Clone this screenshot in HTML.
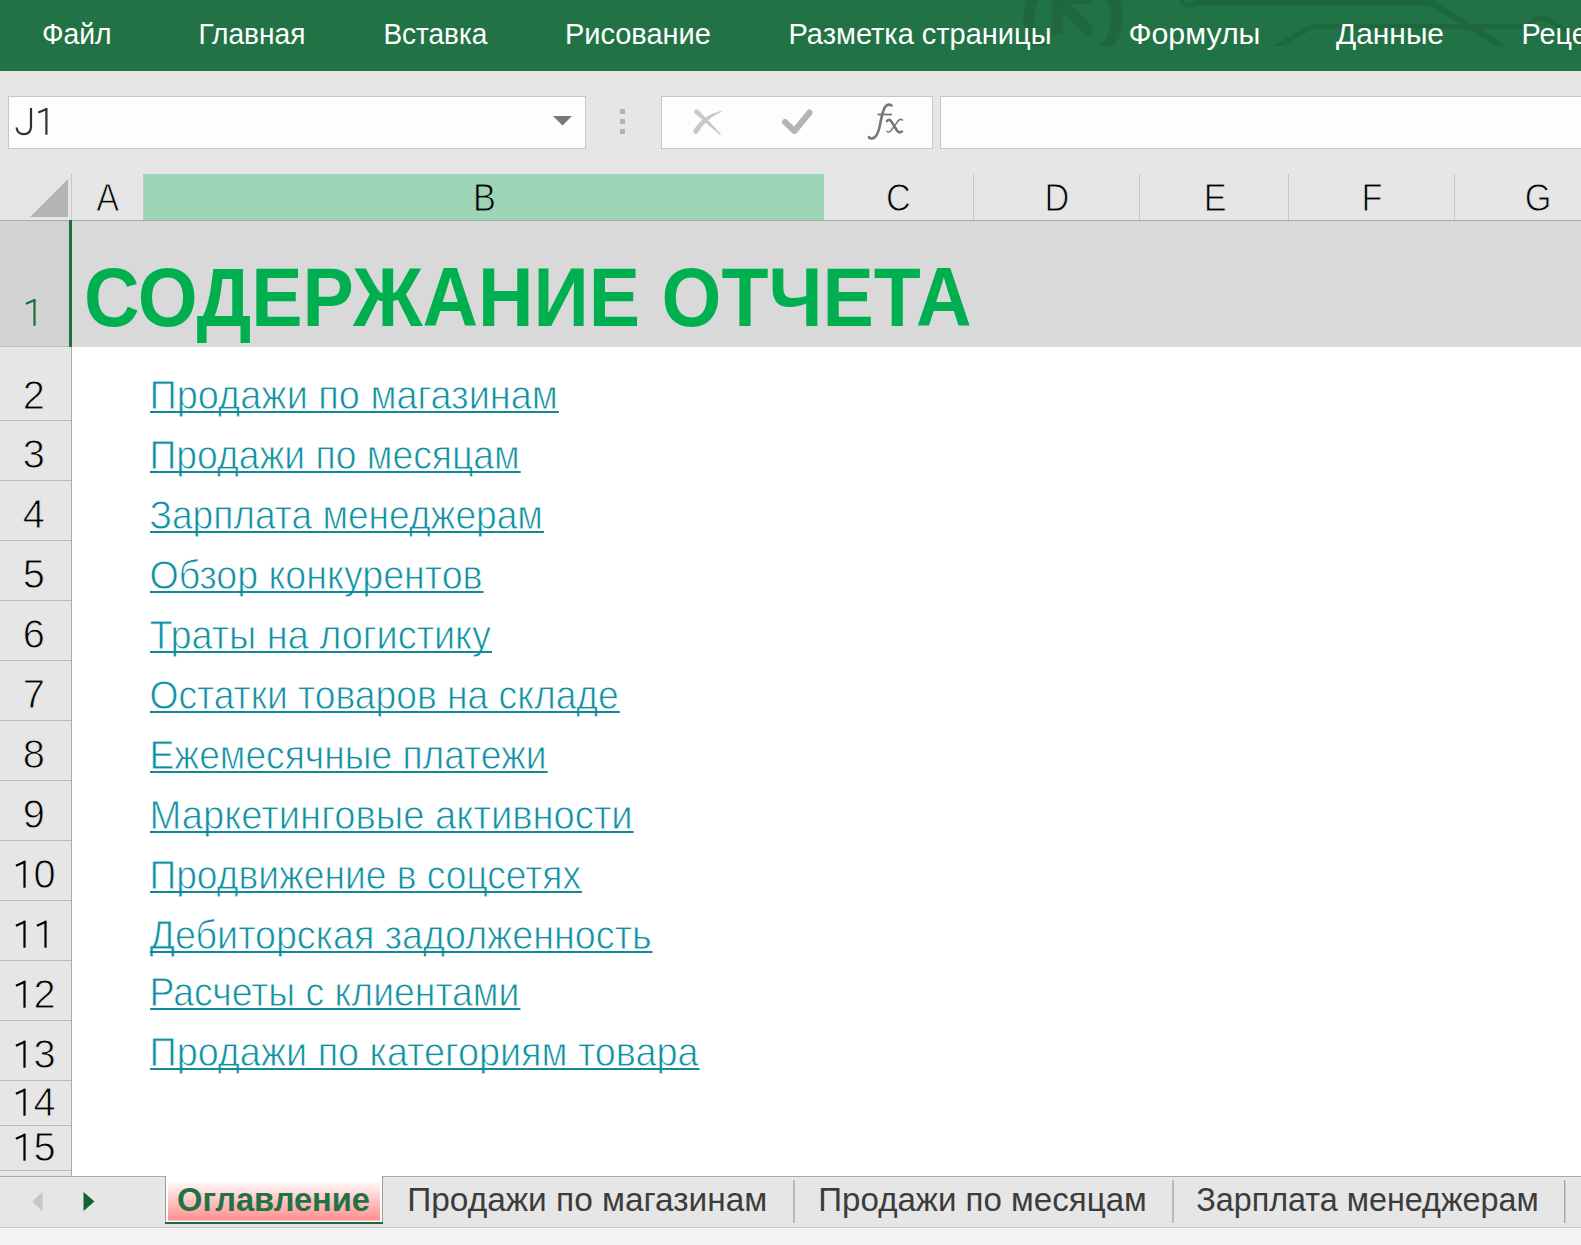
<!DOCTYPE html>
<html><head><meta charset="utf-8"><title>Excel</title>
<style>
html,body{margin:0;padding:0;background:#fff;width:1581px;height:1245px;overflow:hidden}
svg{display:block}
text{font-family:"Liberation Sans",sans-serif}
</style></head><body>
<svg width="1581" height="1245" viewBox="0 0 1581 1245">

<rect x="0" y="0" width="1581" height="71" fill="#217346"/>
<defs><clipPath id="rc"><rect x="0" y="0" width="1581" height="46"/></clipPath></defs>
<g fill="none" stroke="#1f673f" clip-path="url(#rc)"><path d="M1049.2 55 A 44 44 0 1 1 1096.8 55" stroke-width="11.5"/><path d="M1057.3 -7 V34.5 M1051.5 -1.5 H1092" stroke-width="11.5"/><path d="M1062 4 L1091 33" stroke-width="11"/><circle cx="1189" cy="-1" r="7" stroke-width="5"/><path d="M1196 2.5 H1431 L1516 55" stroke-width="6"/><path d="M1260.6 55 L1313 26.5 H1527" stroke-width="5"/><path d="M1527 26.5 Q1540 12 1552 22 L1581 40" stroke-width="5"/></g>
<text x="41.9" y="43.8" font-size="28.8" fill="#ffffff" textLength="69.7" lengthAdjust="spacingAndGlyphs">Файл</text>
<text x="198.4" y="43.8" font-size="28.8" fill="#ffffff" textLength="107" lengthAdjust="spacingAndGlyphs">Главная</text>
<text x="383.4" y="43.8" font-size="28.8" fill="#ffffff" textLength="104" lengthAdjust="spacingAndGlyphs">Вставка</text>
<text x="564.9" y="43.8" font-size="28.8" fill="#ffffff" textLength="146" lengthAdjust="spacingAndGlyphs">Рисование</text>
<text x="788.5" y="43.8" font-size="28.8" fill="#ffffff" textLength="263" lengthAdjust="spacingAndGlyphs">Разметка страницы</text>
<text x="1128.4" y="43.8" font-size="28.8" fill="#ffffff" textLength="132" lengthAdjust="spacingAndGlyphs">Формулы</text>
<text x="1336" y="43.8" font-size="28.8" fill="#ffffff" textLength="108" lengthAdjust="spacingAndGlyphs">Данные</text>
<text x="1521.6" y="43.8" font-size="28.8" fill="#ffffff">Рецензирование</text>
<rect x="0" y="71" width="1581" height="103" fill="#e6e6e6"/>
<rect x="8.5" y="96.5" width="577" height="52" fill="#fdfdfd" stroke="#c6c6c6" stroke-width="1"/>
<path d="M31 108 V126.5 Q31 134.2 23.7 134.2 Q17.3 134.2 16.6 127.5" stroke="#303030" stroke-width="2.2" fill="none"/>
<rect x="45.3" y="107.99999999999999" width="2.2" height="26.7" fill="#303030"/><path d="M46.9 108.99999999999999 L38.3 112.59999999999998" stroke="#303030" stroke-width="2.2" fill="none"/>
<polygon points="553,116 572,116 562.5,125.5" fill="#777777"/>
<rect x="620" y="109" width="5" height="5" fill="#b3b3b3"/>
<rect x="620" y="119" width="5" height="5" fill="#b3b3b3"/>
<rect x="620" y="129" width="5" height="5" fill="#b3b3b3"/>
<rect x="661.5" y="96.5" width="271" height="52" fill="#fdfdfd" stroke="#c6c6c6" stroke-width="1"/>
<path d="M694.8 113.3 L720.1 134.9 L720.9 134.1 L698.2 109.7 A2.5 2.5 0 0 0 694.8 113.3 Z" fill="#c8c8c8"/>
<path d="M693.3 130.2 Q702 115.5 721.2 110.8 L721.4 112 Q706 118.5 697.7 132.9 A2.6 2.6 0 0 1 693.3 130.2 Z" fill="#c8c8c8"/>
<path d="M785 122 L794.5 131 L809.5 112.5" stroke="#b4b4b4" stroke-width="6" fill="none" stroke-linecap="round" stroke-linejoin="round"/>
<path d="M891.5 105.5 Q888 103 885 107 Q882.5 111 880 125 Q877.5 138 872 138.5 Q869.5 138.5 869 137" stroke="#777777" stroke-width="2.6" fill="none" stroke-linecap="round"/>
<path d="M877.5 114.5 H892" stroke="#777777" stroke-width="1.8" fill="none"/>
<path d="M887 121 Q889.5 118.5 891 121 L897 130.5 Q899 133.5 902 131.5" stroke="#777777" stroke-width="2.6" fill="none" stroke-linecap="round"/>
<path d="M902.5 120 Q900.5 118.5 898.5 120.5 L891 130.5 Q889 133 887 131.5" stroke="#777777" stroke-width="1.5" fill="none" stroke-linecap="round"/>
<rect x="940.5" y="96.5" width="700" height="52" fill="#fdfdfd" stroke="#c6c6c6" stroke-width="1"/>
<rect x="0" y="174" width="1581" height="46" fill="#e6e6e6"/>
<polygon points="30,217 68,217 68,179" fill="#b4b4b4"/>
<rect x="144" y="174" width="680" height="46" fill="#9fd5b7"/>
<rect x="71" y="174" width="1" height="46" fill="#c6c6c6"/>
<rect x="143" y="174" width="1" height="46" fill="#c6c6c6"/>
<rect x="973" y="174" width="1" height="46" fill="#c6c6c6"/>
<rect x="1139" y="174" width="1" height="46" fill="#c6c6c6"/>
<rect x="1288" y="174" width="1" height="46" fill="#c6c6c6"/>
<rect x="1454" y="174" width="1" height="46" fill="#c6c6c6"/>
<rect x="0" y="220" width="1581" height="1" fill="#ababab"/>
<g transform="translate(107.6 0) scale(0.88 1)"><text x="0" y="211.2" font-size="39" fill="#000000" stroke="#e6e6e6" stroke-width="1.0" text-anchor="middle">A</text></g>
<g transform="translate(484.5 0) scale(0.88 1)"><text x="0" y="211.2" font-size="39" fill="#000000" stroke="#9fd5b7" stroke-width="1.0" text-anchor="middle">B</text></g>
<g transform="translate(898.5 0) scale(0.88 1)"><text x="0" y="211.2" font-size="39" fill="#000000" stroke="#e6e6e6" stroke-width="1.0" text-anchor="middle">C</text></g>
<g transform="translate(1056.8 0) scale(0.88 1)"><text x="0" y="211.2" font-size="39" fill="#000000" stroke="#e6e6e6" stroke-width="1.0" text-anchor="middle">D</text></g>
<g transform="translate(1215.3 0) scale(0.88 1)"><text x="0" y="211.2" font-size="39" fill="#000000" stroke="#e6e6e6" stroke-width="1.0" text-anchor="middle">E</text></g>
<g transform="translate(1372 0) scale(0.88 1)"><text x="0" y="211.2" font-size="39" fill="#000000" stroke="#e6e6e6" stroke-width="1.0" text-anchor="middle">F</text></g>
<g transform="translate(1538 0) scale(0.88 1)"><text x="0" y="211.2" font-size="39" fill="#000000" stroke="#e6e6e6" stroke-width="1.0" text-anchor="middle">G</text></g>
<rect x="0" y="221" width="1581" height="126" fill="#d9d9d9"/>
<rect x="0" y="221" width="69" height="126" fill="#d3d3d3"/>
<rect x="69" y="220" width="3" height="127" fill="#1e6e3e"/>
<rect x="0" y="346" width="69" height="1" fill="#bcbcbc"/>
<rect x="33.4" y="299.0" width="2.2" height="26.8" fill="#1f6b3d"/><path d="M35.0 300.0 L25.8 303.8" stroke="#1f6b3d" stroke-width="2.2" fill="none"/>
<text x="84" y="325.8" font-size="83" font-weight="bold" fill="#00b050" textLength="887.5" lengthAdjust="spacingAndGlyphs">СОДЕРЖАНИЕ ОТЧЕТА</text>
<rect x="0" y="347" width="71" height="830" fill="#e6e6e6"/>
<rect x="71" y="347" width="1" height="830" fill="#ababab"/>
<rect x="0" y="420" width="71" height="1" fill="#bababa"/>
<rect x="0" y="480" width="71" height="1" fill="#bababa"/>
<rect x="0" y="540" width="71" height="1" fill="#bababa"/>
<rect x="0" y="600" width="71" height="1" fill="#bababa"/>
<rect x="0" y="660" width="71" height="1" fill="#bababa"/>
<rect x="0" y="720" width="71" height="1" fill="#bababa"/>
<rect x="0" y="780" width="71" height="1" fill="#bababa"/>
<rect x="0" y="840" width="71" height="1" fill="#bababa"/>
<rect x="0" y="900" width="71" height="1" fill="#bababa"/>
<rect x="0" y="960" width="71" height="1" fill="#bababa"/>
<rect x="0" y="1020" width="71" height="1" fill="#bababa"/>
<rect x="0" y="1080" width="71" height="1" fill="#bababa"/>
<rect x="0" y="1125" width="71" height="1" fill="#bababa"/>
<rect x="0" y="1170" width="71" height="1" fill="#bababa"/>
<text x="33.8" y="408.5" font-size="39.8" fill="#000000" stroke="#e6e6e6" stroke-width="0.9" text-anchor="middle">2</text>
<text x="33.8" y="467.6" font-size="39.8" fill="#000000" stroke="#e6e6e6" stroke-width="0.9" text-anchor="middle">3</text>
<text x="33.8" y="528" font-size="39.8" fill="#000000" stroke="#e6e6e6" stroke-width="0.9" text-anchor="middle">4</text>
<text x="33.8" y="588" font-size="39.8" fill="#000000" stroke="#e6e6e6" stroke-width="0.9" text-anchor="middle">5</text>
<text x="33.8" y="648" font-size="39.8" fill="#000000" stroke="#e6e6e6" stroke-width="0.9" text-anchor="middle">6</text>
<text x="33.8" y="708" font-size="39.8" fill="#000000" stroke="#e6e6e6" stroke-width="0.9" text-anchor="middle">7</text>
<text x="33.8" y="768" font-size="39.8" fill="#000000" stroke="#e6e6e6" stroke-width="0.9" text-anchor="middle">8</text>
<text x="33.8" y="828" font-size="39.8" fill="#000000" stroke="#e6e6e6" stroke-width="0.9" text-anchor="middle">9</text>
<rect x="23.4" y="860.7" width="2.2" height="27.0" fill="#000000"/><path d="M25.0 861.7 L15.9 865.7" stroke="#000000" stroke-width="2.2" fill="none"/>
<text x="33.4" y="888" font-size="39.8" fill="#000000" stroke="#e6e6e6" stroke-width="0.9">0</text>
<rect x="23.4" y="920.7" width="2.2" height="27.0" fill="#000000"/><path d="M25.0 921.7 L15.9 925.7" stroke="#000000" stroke-width="2.2" fill="none"/>
<rect x="44.4" y="920.7" width="2.2" height="27.0" fill="#000000"/><path d="M46.0 921.7 L36.9 925.7" stroke="#000000" stroke-width="2.2" fill="none"/>
<rect x="23.4" y="980.7" width="2.2" height="27.0" fill="#000000"/><path d="M25.0 981.7 L15.9 985.7" stroke="#000000" stroke-width="2.2" fill="none"/>
<text x="33.4" y="1008" font-size="39.8" fill="#000000" stroke="#e6e6e6" stroke-width="0.9">2</text>
<rect x="23.4" y="1040.7" width="2.2" height="27.0" fill="#000000"/><path d="M25.0 1041.7 L15.9 1045.7" stroke="#000000" stroke-width="2.2" fill="none"/>
<text x="33.4" y="1068" font-size="39.8" fill="#000000" stroke="#e6e6e6" stroke-width="0.9">3</text>
<rect x="23.4" y="1088.7" width="2.2" height="27.0" fill="#000000"/><path d="M25.0 1089.7 L15.9 1093.7" stroke="#000000" stroke-width="2.2" fill="none"/>
<text x="33.4" y="1116" font-size="39.8" fill="#000000" stroke="#e6e6e6" stroke-width="0.9">4</text>
<rect x="23.4" y="1133.7" width="2.2" height="27.0" fill="#000000"/><path d="M25.0 1134.7 L15.9 1138.7" stroke="#000000" stroke-width="2.2" fill="none"/>
<text x="33.4" y="1161" font-size="39.8" fill="#000000" stroke="#e6e6e6" stroke-width="0.9">5</text>
<text x="149.5" y="409.0" font-size="40" fill="#1190a2" stroke="#ffffff" stroke-width="0.8" textLength="408.4" lengthAdjust="spacingAndGlyphs">Продажи по магазинам</text>
<rect x="150" y="411" width="408.9" height="2" fill="#0f8a9a"/>
<text x="149.5" y="469.0" font-size="40" fill="#1190a2" stroke="#ffffff" stroke-width="0.8" textLength="370.20000000000005" lengthAdjust="spacingAndGlyphs">Продажи по месяцам</text>
<rect x="150" y="471" width="370.70000000000005" height="2" fill="#0f8a9a"/>
<text x="149.5" y="529.0" font-size="40" fill="#1190a2" stroke="#ffffff" stroke-width="0.8" textLength="393.4" lengthAdjust="spacingAndGlyphs">Зарплата менеджерам</text>
<rect x="150" y="531" width="393.9" height="2" fill="#0f8a9a"/>
<text x="149.5" y="589.0" font-size="40" fill="#1190a2" stroke="#ffffff" stroke-width="0.8" textLength="333.0" lengthAdjust="spacingAndGlyphs">Обзор конкурентов</text>
<rect x="150" y="591" width="333.5" height="2" fill="#0f8a9a"/>
<text x="149.5" y="649.0" font-size="40" fill="#1190a2" stroke="#ffffff" stroke-width="0.8" textLength="341.5" lengthAdjust="spacingAndGlyphs">Траты на логистику</text>
<rect x="150" y="651" width="342.0" height="2" fill="#0f8a9a"/>
<text x="149.5" y="709.0" font-size="40" fill="#1190a2" stroke="#ffffff" stroke-width="0.8" textLength="469.29999999999995" lengthAdjust="spacingAndGlyphs">Остатки товаров на складе</text>
<rect x="150" y="711" width="469.79999999999995" height="2" fill="#0f8a9a"/>
<text x="149.5" y="769.0" font-size="40" fill="#1190a2" stroke="#ffffff" stroke-width="0.8" textLength="397.1" lengthAdjust="spacingAndGlyphs">Ежемесячные платежи</text>
<rect x="150" y="771" width="397.6" height="2" fill="#0f8a9a"/>
<text x="149.5" y="829.0" font-size="40" fill="#1190a2" stroke="#ffffff" stroke-width="0.8" textLength="483.20000000000005" lengthAdjust="spacingAndGlyphs">Маркетинговые активности</text>
<rect x="150" y="831" width="483.70000000000005" height="2" fill="#0f8a9a"/>
<text x="149.5" y="889.0" font-size="40" fill="#1190a2" stroke="#ffffff" stroke-width="0.8" textLength="431.5" lengthAdjust="spacingAndGlyphs">Продвижение в соцсетях</text>
<rect x="150" y="891" width="432.0" height="2" fill="#0f8a9a"/>
<text x="149.5" y="949.4000000000001" font-size="40" fill="#1190a2" stroke="#ffffff" stroke-width="0.8" textLength="502.0" lengthAdjust="spacingAndGlyphs">Дебиторская задолженность</text>
<rect x="150" y="951" width="502.5" height="2" fill="#0f8a9a"/>
<text x="149.5" y="1006.2" font-size="40" fill="#1190a2" stroke="#ffffff" stroke-width="0.8" textLength="369.9" lengthAdjust="spacingAndGlyphs">Расчеты с клиентами</text>
<rect x="150" y="1008" width="370.4" height="2" fill="#0f8a9a"/>
<text x="149.5" y="1066.0" font-size="40" fill="#1190a2" stroke="#ffffff" stroke-width="0.8" textLength="548.9" lengthAdjust="spacingAndGlyphs">Продажи по категориям товара</text>
<rect x="150" y="1068" width="549.4" height="2" fill="#0f8a9a"/>
<rect x="0" y="1176" width="1581" height="51" fill="#e6e6e6"/>
<rect x="0" y="1176" width="1581" height="1" fill="#ababab"/>
<rect x="0" y="1227" width="1581" height="18" fill="#f3f3f3"/>
<rect x="0" y="1227" width="1581" height="1" fill="#c8c8c8"/>
<polygon points="42.5,1192 42.5,1211 32,1201.5" fill="#c6c6c6"/>
<polygon points="83.5,1192 83.5,1211 94.5,1201.5" fill="#146433"/>
<defs><linearGradient id="tg" x1="0" y1="0" x2="0" y2="1"><stop offset="0" stop-color="#ffffff"/><stop offset="0.15" stop-color="#ffeeee"/><stop offset="1" stop-color="#ff8e8e"/></linearGradient></defs>
<rect x="165" y="1176" width="218" height="48" fill="#9c9c9c"/>
<rect x="166" y="1176" width="216" height="47" fill="#ffffff"/>
<rect x="168" y="1179.5" width="212" height="41" fill="url(#tg)"/>
<rect x="165" y="1222" width="218" height="2" fill="#1a6e3c"/>
<text x="177" y="1210.6" font-size="34" font-weight="bold" fill="#217346" textLength="193" lengthAdjust="spacingAndGlyphs">Оглавление</text>
<text x="407.2" y="1211" font-size="34" fill="#3c3c3c" textLength="360.1" lengthAdjust="spacingAndGlyphs">Продажи по магазинам</text>
<text x="818.3" y="1211" font-size="34" fill="#3c3c3c" textLength="328.5" lengthAdjust="spacingAndGlyphs">Продажи по месяцам</text>
<text x="1196.2" y="1211" font-size="34" fill="#3c3c3c" textLength="342.5" lengthAdjust="spacingAndGlyphs">Зарплата менеджерам</text>
<rect x="793.5" y="1180" width="1" height="43" fill="#8e8e8e"/>
<rect x="1172.5" y="1180" width="1" height="43" fill="#8e8e8e"/>
<rect x="1564.3" y="1180" width="1" height="43" fill="#8e8e8e"/>
</svg></body></html>
